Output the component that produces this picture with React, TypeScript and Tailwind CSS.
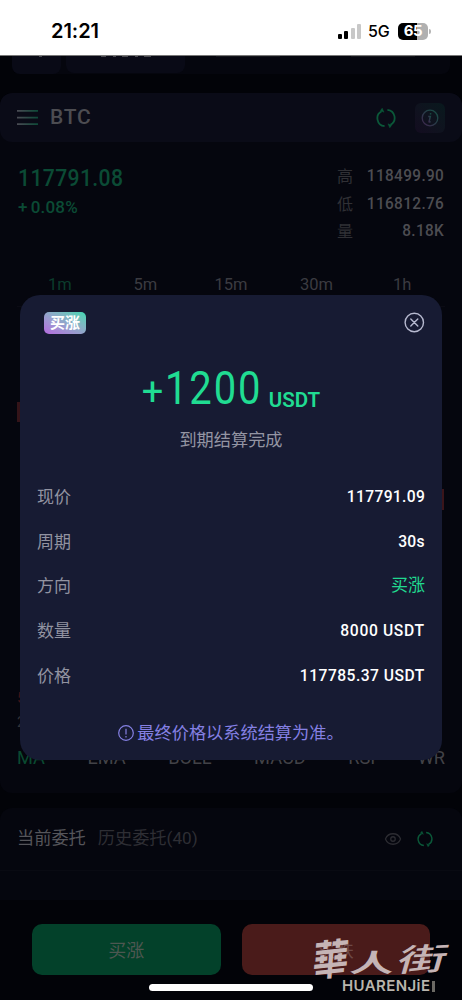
import { LuEye } from "react-icons/lu";

const stats = [
  { label: "高", value: "118499.90" },
  { label: "低", value: "116812.76" },
  { label: "量", value: "8.18K" },
];

const intervals = ["1m", "5m", "15m", "30m", "1h"];

const indicators = ["MA", "EMA", "BOLL", "MACD", "RSI", "WR"];

const details = [
  { label: "现价", value: "117791.09", style: "text-white tracking-[0.35px]" },
  { label: "周期", value: "30s", style: "text-white tracking-[0.2px]" },
  { label: "方向", value: "买涨", style: "text-[#20d98f] font-normal" },
  { label: "数量", value: "8000 USDT", style: "text-white tracking-[0.7px]" },
  { label: "价格", value: "117785.37 USDT", style: "text-white tracking-[0.5px]" },
];

const RefreshIcon = ({ size }: { size: number }) => (
  <svg width={size} height={size} viewBox="0 0 20 20" fill="none" stroke="#0b5839" strokeWidth="1.8">
    <path d="M5.6 3.2A8 8 0 0 0 8.6 18.2" />
    <path d="M11.4 1.8A8 8 0 0 1 14.4 16.8" />
    <path d="M4.4 2.6L6.2 0.2L8 4.2ZM15.6 17.4L13.8 19.8L12 15.8Z" fill="#0b5839" strokeWidth="0.5" />
  </svg>
);

const StatusBar = () => (
  <div className="flex h-[56px] shrink-0 items-start justify-between border-b border-[#777] bg-white pl-[51px] pr-[31px] pt-[19px] text-black">
    <span className="font-['Inter'] text-[20px] font-semibold leading-[24px] tracking-[-0.05px]">21:21</span>
    <div className="flex h-[24px] items-center">
      <div className="flex h-[15px] items-end gap-[2.4px]">
        <div className="h-[5px] w-[4px] rounded-[1px] bg-black" />
        <div className="h-[8px] w-[4px] rounded-[1px] bg-black" />
        <div className="h-[11px] w-[4px] rounded-[1px] bg-[#c8c8c8]" />
        <div className="h-[15px] w-[4px] rounded-[1px] bg-[#c8c8c8]" />
      </div>
      <span className="ml-[7px] w-[23px] whitespace-nowrap font-['Inter'] text-[16px] font-medium leading-[24px] tracking-[-0.2px]">5G</span>
      <div className="ml-[7px] flex h-[17px] w-[30px] items-center justify-center rounded-[5px] bg-gradient-to-r from-black from-65% to-[#b0b0b0] to-65% font-['Inter'] text-[15px] font-bold tracking-[-0.5px] text-white">
        65
      </div>
      <div className="ml-[1px] h-[5px] w-[2px] rounded-r bg-[#b5b5b5]" />
    </div>
  </div>
);

const TopTabs = () => (
  <div className="mx-3 flex h-[18px] shrink-0 gap-[5px] rounded-b-lg bg-[#05060e]">
    <div className="h-[18px] w-[49px] rounded-b-lg bg-[#090a16]">
      <div className="ml-[27px] h-px w-[3px] bg-[#4a4a50]" />
    </div>
    <div className="h-[17px] w-[119px] rounded-b-lg bg-[#090a16]">
      <div className="ml-[35px] flex w-[50px] justify-between">
        <div className="h-px w-[5px] bg-[#4a4a50]" />
        <div className="h-px w-[3px] bg-[#4a4a50]" />
        <div className="h-px w-[6px] bg-[#4a4a50]" />
        <div className="h-px w-[3px] bg-[#4a4a50]" />
        <div className="h-px w-[7px] bg-[#4a4a50]" />
      </div>
    </div>
    <div className="ml-[26px] h-px w-[64px] bg-[#14151b]" />
    <div className="ml-[66px] h-px w-[64px] bg-[#14151b]" />
  </div>
);

const Market = () => (
  <div className="mt-[19px] h-[700px] shrink-0 overflow-hidden rounded-xl bg-[#05060e]">
    <div className="flex h-[49px] items-center rounded-xl bg-[#0a0b17] pl-[17px] pr-[17px]">
      <svg width="21" height="17" viewBox="0 0 21 17">
        <defs>
          <linearGradient id="menuLine" x1="0" x2="1" y1="0" y2="0">
            <stop offset="0" stopColor="#4b4b54" />
            <stop offset="1" stopColor="#0d4a38" />
          </linearGradient>
        </defs>
        <path d="M0 1h21v1.7H0zM0 7.7h21v1.7H0zM0 14.3h21V16H0z" fill="url(#menuLine)" />
      </svg>
      <h2 className="ml-[12px] text-[21px] font-medium tracking-[0.8px] text-[#4c4c51]">BTC</h2>
      <div className="ml-auto mt-px flex items-center gap-[19px]">
        <RefreshIcon size={20} />
        <div className="flex size-[30px] items-center justify-center rounded-md bg-gradient-to-bl from-[#08191d] to-[#130c20]">
          <svg width="18" height="18" viewBox="0 0 18 18" fill="none" stroke="url(#infoLine)" strokeWidth="1.3">
            <defs>
              <linearGradient id="infoLine" x1="1" x2="0" y1="0" y2="1">
                <stop offset="0" stopColor="#145043" />
                <stop offset="1" stopColor="#40264f" />
              </linearGradient>
            </defs>
            <circle cx="9" cy="9" r="7.8" />
            <path d="M7.2 7.4h2.1L8.1 12.6q-.1.8 1.6 0M9.7 4.2l-.3 1.3" strokeWidth="1.5" />
          </svg>
        </div>
      </div>
    </div>

    <div className="flex h-[107px] justify-between pl-[18px] pr-[18px] pt-[21px]">
      <div className="font-medium text-[#0b4b35]">
        <p className="w-[106px] origin-left scale-x-92 whitespace-nowrap text-[23px] leading-[32px] tracking-[0.4px]">117791.08</p>
        <p className="text-[17px] leading-[25px] tracking-[0.2px]">
          +<span className="ml-[3px]">0.08%</span>
        </p>
      </div>
      <div className="text-[16.5px] leading-[27.5px]">
        {stats.map((s) => (
          <div key={s.label} className="flex h-[27.5px] w-[107px] justify-between">
            <span className="text-[16px] text-[#303035]">{s.label}</span>
            <span className="-mt-px origin-right scale-x-93 whitespace-nowrap text-right font-medium tracking-[0.4px] text-[#4d4d52]">{s.value}</span>
          </div>
        ))}
      </div>
    </div>

    <div className="mt-[24px] flex justify-around px-[17px] text-[16.5px] leading-[24px] text-[#3b3b41]">
      {intervals.map((t) => (
        <span key={t} className="w-[70px] text-center first:text-[#0b3c2c]">{t}</span>
      ))}
    </div>

    {/* candles that stick out on each side of the dialog */}
    <div className="mx-[17px] mt-[9px] h-[421px] border-t border-[#0b0b14]">
      <div className="pt-[95px]">
        <div className="h-[20px] w-[5px] bg-[#341419]" />
      </div>
      <div className="ml-auto mr-px mt-[67px] h-[21px] w-[4px] bg-[#3b151a]" />
      <div className="mt-[178px] text-[15px] leading-[20px] text-[#401519]">5</div>
      <div className="text-[15px] leading-[28px] text-[#333338]">2</div>
    </div>

    <div className="mt-[19px] flex justify-between px-[17px] text-[18.2px] leading-[24px] text-[#424247]">
      {indicators.map((i) => (
        <span key={i} className="first:text-[#0a4a31]">{i}</span>
      ))}
    </div>
  </div>
);

const Orders = () => (
  <div className="mt-[15px] h-[92px] shrink-0 rounded-t-xl bg-[#05060e]">
    <div className="flex h-[63px] items-center border-b border-[#090a12] pl-[17px] pr-[29px] text-[17.2px]">
      <span className="text-[#55555a]">当前委托</span>
      <span className="ml-[12px] text-[#2e2e34]">历史委托(40)</span>
      <LuEye className="ml-auto mr-[15px] size-[18px] text-[#2c2c32]" strokeWidth={1.7} />
      <RefreshIcon size={16} />
    </div>
  </div>
);

const Watermark = () => (
  <div className="absolute left-[313px] top-[932px] h-[64px] w-[146px] text-[#c5b4b5]">
    <div className="flex h-[46px] items-start font-['Noto_Sans_CJK_TC',sans-serif] font-bold">
      <span className="w-[38px] -rotate-6 -skew-x-12 scale-y-115 text-[36px] leading-[48px]">華</span>
      <span className="ml-[1px] mt-[7px] w-[40px] scale-x-105 scale-y-60 -skew-x-6 text-[42px] leading-[44px]">人</span>
      <span className="ml-[7px] mt-[8px] w-[36px] origin-left -rotate-3 -skew-x-12 scale-x-145 scale-y-90 text-[34px] font-medium leading-[38px]">街</span>
    </div>
    <p className="ml-[29px] flex items-center whitespace-nowrap font-['Inter'] text-[15px] font-semibold leading-[16px] tracking-[0.4px] text-[#b9b5ad]">
      HUARENJiE
      <span className="ml-[2px] h-[11px] w-[3px] bg-[#6b6964]" />
    </p>
  </div>
);

const ResultDialog = () => (
  <div className="absolute left-[20px] top-[295px] flex h-[465px] w-[422px] flex-col rounded-[20px] bg-[#171b33] px-[17px]">
    <div className="flex h-[56px] shrink-0 items-center justify-between pl-[7px]">
      <span className="flex h-[22px] w-[42px] items-center justify-center rounded-[5px] bg-gradient-to-tr from-[#b468df] to-[#35d8b0] text-[15px] font-bold leading-none text-white">
        买涨
      </span>
      <svg className="-mt-[2px]" width="21" height="21" viewBox="0 0 21 21" fill="none" stroke="#b6b9cf" strokeWidth="1.4" strokeLinecap="round">
        <circle cx="10.3" cy="10.5" r="9.2" />
        <path d="M6.8 7l7 7M13.8 7l-7 7" />
      </svg>
    </div>
    <div className="flex h-[64px] items-baseline justify-center pt-[7px] text-[#20dc92]">
      <span className="relative top-px w-[23px] text-[38px] leading-[60px]">+</span>
      <span className="w-[98px] origin-left scale-x-86 whitespace-nowrap text-[46.5px] leading-[60px] tracking-[2.2px]">1200</span>
      <span className="relative top-[3px] ml-[6px] text-[20.5px] font-semibold tracking-[0px]">USDT</span>
    </div>
    <p className="mt-[12px] text-center text-[17.2px] leading-[26px] text-[#9495a3]">到期结算完成</p>
    <div className="mt-[21.5px]">
      {details.map((d) => (
        <div key={d.label} className="flex h-[44.7px] items-center justify-between text-[17px] leading-[24px]">
          <span className="text-[#9293a1]">{d.label}</span>
          <span className={`-mt-[2px] origin-right font-medium not-[.font-normal]:scale-x-92 ${d.style}`}>{d.value}</span>
        </div>
      ))}
    </div>
    <div className="mt-[22.5px] flex items-center justify-center gap-[3px] text-[17.2px] leading-[26px] text-[#8580e3]">
      <svg width="16" height="16" viewBox="0 0 16 16" fill="none" stroke="currentColor" strokeWidth="1.2">
        <circle cx="8" cy="8" r="7.3" />
        <path d="M8 3.8v5.8M8 11v1.4" />
      </svg>
      <span>最终价格以系统结算为准。</span>
    </div>
  </div>
);

const App = () => {
  return (
    <div className="relative flex h-[1000px] w-[462px] flex-col overflow-hidden bg-[#020308] font-['Roboto','Noto_Sans_CJK_SC',sans-serif]">
      <StatusBar />
      <TopTabs />
      <Market />
      <Orders />
      <div className="mt-[24px] flex shrink-0 gap-[21px] px-[32px] text-[18px] text-[#4d5751]">
        <button className="h-[51px] flex-1 rounded-[10px] bg-[#03412a] pt-px">买涨</button>
        <button className="h-[51px] flex-1 rounded-[10px] bg-[#4a1b1a] pt-px text-[#6d4846]">买跌</button>
      </div>
      <ResultDialog />
      <div className="absolute left-[149px] top-[984px] h-[7px] w-[164px] rounded-full bg-white" />
      <Watermark />
    </div>
  );
};

export default App;
